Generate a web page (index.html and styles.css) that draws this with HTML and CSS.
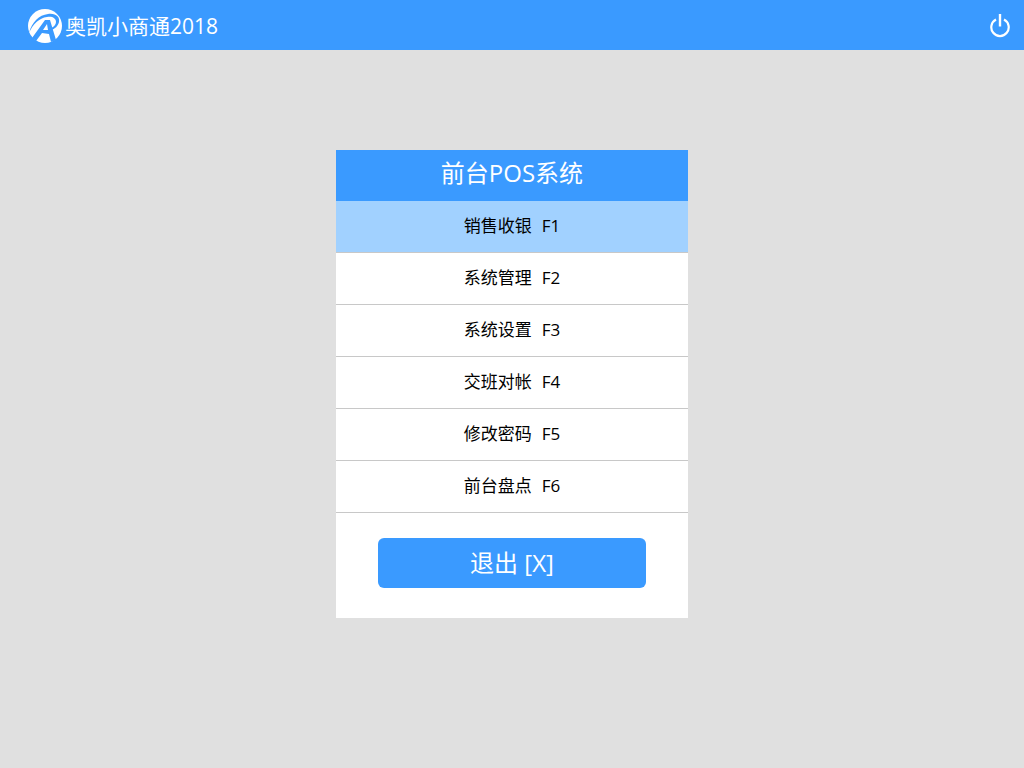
FILE: index.html
```html
<!DOCTYPE html>
<html lang="zh-CN">

<head>
    <meta charset="UTF-8">
    <meta name="viewport" content="width=device-width, initial-scale=1.0">
    <title>奥凯小商通2018</title>

    <link rel="stylesheet" href="styles.css">
</head>

<body>
    <header class="topbar">
        <div class="brand">
            <svg class="logo" viewBox="0 0 34 34" aria-hidden="true">
                <circle cx="17" cy="17" r="17" fill="#fff" />
                <g fill="#3a9aff">
                    <path d="M1 24C4 13 11 6 20 5c8-1 12 3 11 8-1 4-4 7-8 8v-2c3-1 5-4 5-6 0-4-4-6-9-5C11 9 5 15 1 24z" />
                    <path d="M17 11h5l6 20-5 2-2-8-7-1-6 8-4-3zM20 21l-1-6-4 6z" />
                </g>
            </svg>
            <span>奥凯小商通2018</span>
        </div>
        <button class="power" type="button" aria-label="关闭">
            <svg viewBox="0 0 20 24" fill="none" stroke="#fff" aria-hidden="true">
                <path d="M6 5.6a8.7 8.7 0 1 0 8 0" stroke-width="2.2" />
                <path d="M10 0v12.5" stroke-width="2.4" />
            </svg>
        </button>
    </header>

    <main class="main">
        <section class="panel">
            <h1 class="panel-title">前台POS系统</h1>
            <nav class="menu">
                <a class="menu-item active" href="#sale"><span>销售收银</span><span>F1</span></a>
                <a class="menu-item" href="#manage"><span>系统管理</span><span>F2</span></a>
                <a class="menu-item" href="#settings"><span>系统设置</span><span>F3</span></a>
                <a class="menu-item" href="#shift"><span>交班对帐</span><span>F4</span></a>
                <a class="menu-item" href="#password"><span>修改密码</span><span>F5</span></a>
                <a class="menu-item" href="#stock"><span>前台盘点</span><span>F6</span></a>
            </nav>
            <div class="panel-foot">
                <button class="exit" type="button">退出 [X]</button>
            </div>
        </section>
    </main>
</body>

</html>
```

FILE: styles.css
```css
* {
    box-sizing: border-box;
}

body {
    margin: 0;
    min-height: 100vh;
    display: flex;
    flex-direction: column;
    background: #e0e0e0;
    color: #000;
    font-family: "Open Sans", "Noto Sans CJK SC", sans-serif;
}

button {
    border: 0;
    font-family: inherit;
    cursor: pointer;
}

.topbar {
    height: 50px;
    padding: 2px 14px 0 28px;
    display: flex;
    align-items: center;
    justify-content: space-between;
    background: #3a9aff;
    color: #fff;
}

.brand {
    display: flex;
    align-items: center;
    gap: 3px;
    font-size: 21px;
    line-height: 34px;
}

.logo {
    width: 34px;
    height: 34px;
}

.power {
    padding: 0;
    background: none;
}

.power svg {
    display: block;
    width: 20px;
    height: 24px;
}

.main {
    flex: 1;
    display: flex;
    align-items: center;
    justify-content: center;
    padding-bottom: 50px;
}

.panel {
    width: 352px;
    max-width: 100%;
    background: #fff;
}

.panel-title {
    margin: 0;
    padding-bottom: 5px;
    background: #3a9aff;
    color: #fff;
    font-size: 24px;
    font-weight: 400;
    line-height: 46px;
    text-align: center;
}

.menu-item {
    display: flex;
    justify-content: center;
    gap: 10px;
    padding-bottom: 2px;
    border-bottom: 1px solid #c8c8c8;
    color: #000;
    font-size: 17px;
    line-height: 49px;
    text-decoration: none;
}

.menu-item.active {
    background: #a1d1ff;
}

.panel-foot {
    padding: 25px 42px 30px;
}

.exit {
    display: block;
    width: 100%;
    padding: 0;
    border-radius: 6px;
    background: #3a9aff;
    color: #fff;
    font-size: 24px;
    line-height: 50px;
}
```
